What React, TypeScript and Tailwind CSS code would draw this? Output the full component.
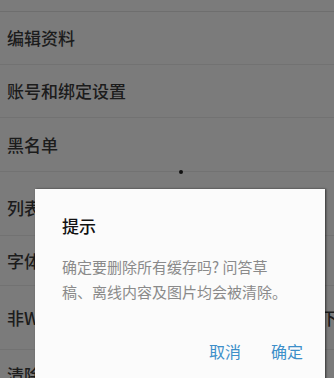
import React from "react";

const rows = [
  { label: "编辑资料", h: "h-[53px]" },
  { label: "账号和绑定设置", h: "h-[53px]" },
  { label: "黑名单", h: "h-[54px]" },
];

const rows2 = [
  { label: "列表显示", h: "h-[56px]" },
  { label: "字体大小", h: "h-[50px]" },
  { label: "非WiFi网络下显示图片", h: "h-[64px]", right: "下" },
  { label: "清除缓存", h: "h-[50px]" },
];

export default function App() {
  return (
    <div
      className="relative h-[378px] w-[334px] overflow-hidden bg-[#7b7b7b] text-[#1c1c1c]"
      style={{ fontFamily: '"Noto Sans CJK SC", "Noto Sans", sans-serif' }}
    >
      <div className="h-[12px] border-b border-[#6e6e6e]" />
      {rows.map((r) => (
        <div
          key={r.label}
          className={`${r.h} flex items-center border-b border-[#727272] pl-[7px] text-[17px] font-medium`}
        >
          {r.label}
        </div>
      ))}
      <div className="flex h-[8px]">
        <span className="ml-[179px] mt-[-2px] h-[4px] w-[4px] rounded-full bg-[#111]" />
      </div>
      {rows2.map((r) => (
        <div
          key={r.label}
          className={`${r.h} flex items-center justify-between border-b border-[#727272] pl-[7px] text-[17px] font-medium`}
        >
          <span>{r.label}</span>
          {r.right && <span className="mr-[-4px]">{r.right}</span>}
        </div>
      ))}

      {/* dialog */}
      <div className="absolute left-[35px] top-[189px] h-[200px] w-[290px] bg-[#fbfbfb] shadow-[1px_0_2px_rgba(0,0,0,0.6)]">
        <div className="pl-[27px] pt-[23px] text-[17px] font-medium leading-[28px] text-[#111]">
          提示
        </div>
        <div className="mt-[14px] pl-[27px] pr-[20px] text-[15px] leading-[25px] text-[#8a8a8a]">
          确定要删除所有缓存吗? 问答草
          <br />
          稿、离线内容及图片均会被清除。
        </div>
        <div className="mt-[35px] flex justify-end gap-[30px] pr-[22px] text-[16px] leading-[24px] text-[#3d8fc9]">
          <button>取消</button>
          <button>确定</button>
        </div>
      </div>
    </div>
  );
}
